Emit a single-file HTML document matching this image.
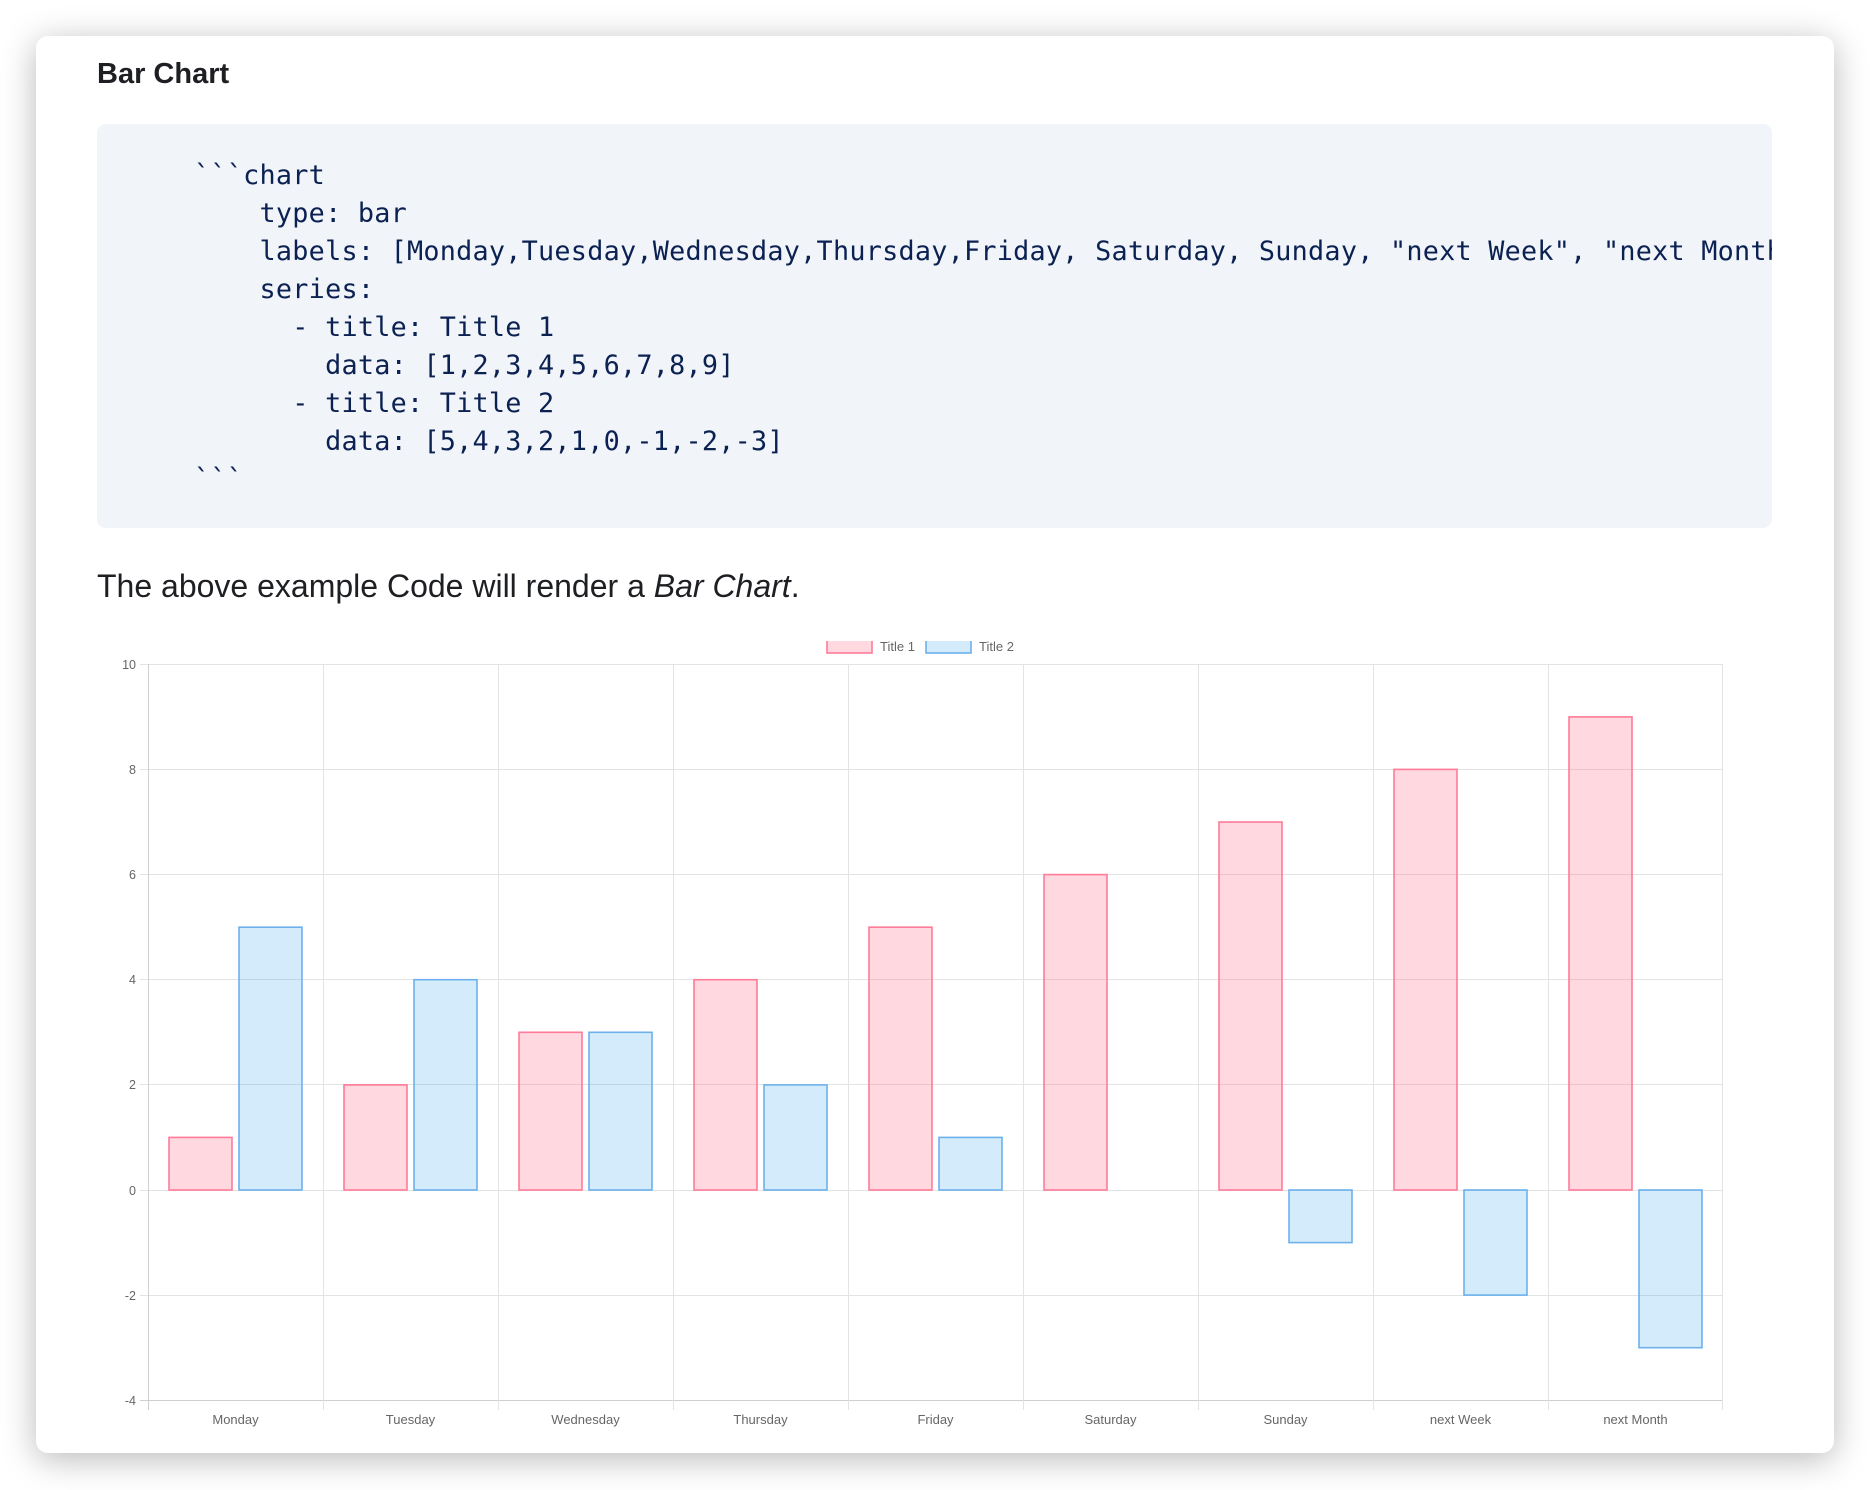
<!DOCTYPE html>
<html><head><meta charset="utf-8"><style>
html,body{margin:0;padding:0;background:#fff;width:1870px;height:1490px;overflow:hidden;}
.card{position:absolute;left:36px;top:36px;width:1798px;height:1417px;background:#fff;border-radius:12px;box-shadow:0 6px 34px rgba(0,0,0,0.28);}
h2{position:absolute;left:97px;top:58px;margin:0;font:bold 29px "Liberation Sans",sans-serif;color:#1d1f23;}
.code{position:absolute;left:97px;top:124px;width:1675px;height:404px;background:#f1f4f8;border-radius:9px;overflow:hidden;}
.code pre{position:absolute;left:97px;top:33px;margin:0;font:26.8px/38px "DejaVu Sans Mono","Liberation Mono",monospace;color:#0b2152;white-space:pre;letter-spacing:0.25px;}
p{position:absolute;left:97px;top:568px;margin:0;font:32px "Liberation Sans",sans-serif;color:#1d1f23;}
svg{position:absolute;left:0;top:0;}
</style></head><body>
<div class="card"></div>
<h2>Bar Chart</h2>
<div class="code"><pre>&#96;&#96;&#96;chart
    type: bar
    labels: [Monday,Tuesday,Wednesday,Thursday,Friday, Saturday, Sunday, "next Week", "next Month"]
    series:
      - title: Title 1
        data: [1,2,3,4,5,6,7,8,9]
      - title: Title 2
        data: [5,4,3,2,1,0,-1,-2,-3]
&#96;&#96;&#96;</pre></div>
<p>The above example Code will render a <i>Bar Chart</i>.</p>
<svg width="1870" height="1490" font-family="Liberation Sans, sans-serif">
<g stroke="#e3e3e3" stroke-width="1">
<line x1="148" y1="664.5" x2="1723" y2="664.5"/>
<line x1="148" y1="769.5" x2="1723" y2="769.5"/>
<line x1="148" y1="874.5" x2="1723" y2="874.5"/>
<line x1="148" y1="979.5" x2="1723" y2="979.5"/>
<line x1="148" y1="1084.5" x2="1723" y2="1084.5"/>
<line x1="148" y1="1190.5" x2="1723" y2="1190.5"/>
<line x1="148" y1="1295.5" x2="1723" y2="1295.5"/>
<line x1="140" y1="1400.5" x2="1723" y2="1400.5" stroke="#cfcfcf"/>
<line x1="148.5" y1="664" x2="148.5" y2="1410" stroke="#cfcfcf"/>
<line x1="323.5" y1="664" x2="323.5" y2="1410"/>
<line x1="498.5" y1="664" x2="498.5" y2="1410"/>
<line x1="673.5" y1="664" x2="673.5" y2="1410"/>
<line x1="848.5" y1="664" x2="848.5" y2="1410"/>
<line x1="1023.5" y1="664" x2="1023.5" y2="1410"/>
<line x1="1198.5" y1="664" x2="1198.5" y2="1410"/>
<line x1="1373.5" y1="664" x2="1373.5" y2="1410"/>
<line x1="1548.5" y1="664" x2="1548.5" y2="1410"/>
<line x1="1722.5" y1="664" x2="1722.5" y2="1410"/>
<line x1="140" y1="664.5" x2="148" y2="664.5"/><line x1="140" y1="769.5" x2="148" y2="769.5"/><line x1="140" y1="874.5" x2="148" y2="874.5"/><line x1="140" y1="979.5" x2="148" y2="979.5"/><line x1="140" y1="1084.5" x2="148" y2="1084.5"/><line x1="140" y1="1190.5" x2="148" y2="1190.5"/><line x1="140" y1="1295.5" x2="148" y2="1295.5"/>
</g>
<g fill="#666" font-size="12.5" text-anchor="end">
<text x="136" y="669">10</text><text x="136" y="774">8</text><text x="136" y="879">6</text><text x="136" y="984">4</text><text x="136" y="1089">2</text><text x="136" y="1195">0</text><text x="136" y="1300">-2</text><text x="136" y="1405">-4</text>
</g>
<g fill="#666" font-size="13" text-anchor="middle">
<text x="235.5" y="1424">Monday</text><text x="410.5" y="1424">Tuesday</text><text x="585.5" y="1424">Wednesday</text><text x="760.5" y="1424">Thursday</text><text x="935.5" y="1424">Friday</text><text x="1110.5" y="1424">Saturday</text><text x="1285.5" y="1424">Sunday</text><text x="1460.5" y="1424">next Week</text><text x="1635.5" y="1424">next Month</text>
</g>
<g fill="rgba(255,99,132,0.25)" stroke="#ff7b97" stroke-width="1.6">
<rect x="169" y="1137.4" width="63" height="52.6"/>
<rect x="344" y="1084.9" width="63" height="105.1"/>
<rect x="519" y="1032.3" width="63" height="157.7"/>
<rect x="694" y="979.7" width="63" height="210.3"/>
<rect x="869" y="927.2" width="63" height="262.8"/>
<rect x="1044" y="874.6" width="63" height="315.4"/>
<rect x="1219" y="822" width="63" height="368"/>
<rect x="1394" y="769.4" width="63" height="420.6"/>
<rect x="1569" y="716.9" width="63" height="473.1"/>
</g>
<g fill="rgba(54,162,235,0.22)" stroke="#6cb1ec" stroke-width="1.6">
<rect x="239" y="927.2" width="63" height="262.8"/>
<rect x="414" y="979.7" width="63" height="210.3"/>
<rect x="589" y="1032.3" width="63" height="157.7"/>
<rect x="764" y="1084.9" width="63" height="105.1"/>
<rect x="939" y="1137.4" width="63" height="52.6"/>
<rect x="1289" y="1190" width="63" height="52.6"/>
<rect x="1464" y="1190" width="63" height="105.1"/>
<rect x="1639" y="1190" width="63" height="157.7"/>
</g>
<rect x="827" y="640" width="45" height="13" fill="rgba(255,99,132,0.25)" stroke="#ff7b97" stroke-width="1.6"/>
<rect x="926" y="640" width="45" height="13" fill="rgba(54,162,235,0.22)" stroke="#6cb1ec" stroke-width="1.6"/>
<text x="880" y="651" font-size="13" fill="#666">Title 1</text>
<text x="979" y="651" font-size="13" fill="#666">Title 2</text>
<rect x="700" y="620" width="400" height="21" fill="#fff"/>
</svg>
</body></html>
